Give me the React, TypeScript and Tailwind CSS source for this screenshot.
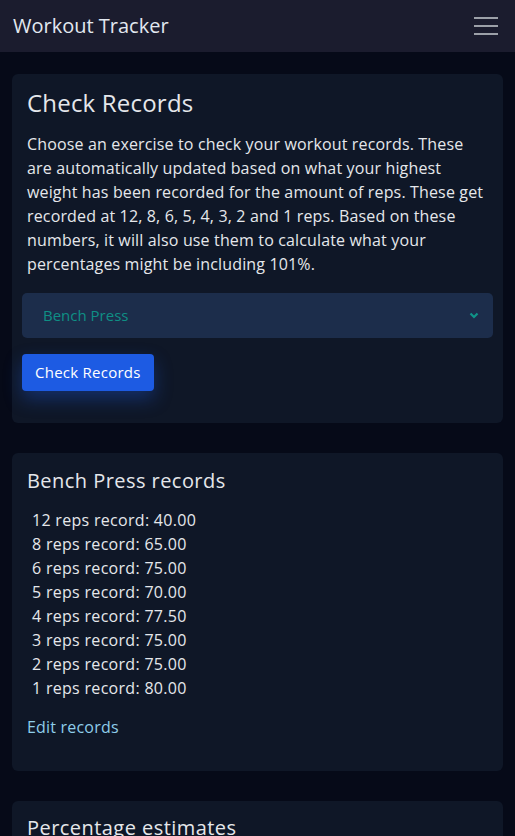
import React from "react";

const records = [
  ["12", "40.00"],
  ["8", "65.00"],
  ["6", "75.00"],
  ["5", "70.00"],
  ["4", "77.50"],
  ["3", "75.00"],
  ["2", "75.00"],
  ["1", "80.00"],
];

export default function App() {
  return (
    <div
      className="min-h-[836px] bg-[#060a18] text-[#e5e7eb]"
      style={{ fontFamily: "'Open Sans', 'Noto Sans', sans-serif" }}
    >
      <nav className="h-[52px] bg-[#1b1c2e] flex items-center justify-between pl-[13px] pr-[17px]">
        <span className="text-[20px] text-[#e2e8f0]">Workout Tracker</span>
        <div className="flex flex-col gap-[6px] w-[24px]">
          <span className="block h-[2px] bg-[#9ca0a8]" />
          <span className="block h-[2px] bg-[#9ca0a8]" />
          <span className="block h-[2px] bg-[#9ca0a8]" />
        </div>
      </nav>

      <main className="px-[12px] pt-[22px] flex flex-col gap-[30px]">
        <section className="bg-[#0f1727] rounded-[6px] px-[10px] pt-[14px] pb-[32px]">
          <h1 className="px-[5px] text-[24px] leading-[30px] tracking-[0.2px] text-[#e5e7eb]">Check Records</h1>
          <p className="px-[5px] mt-[14px] text-[16px] leading-[24px] tracking-[0.15px]">
            Choose an exercise to check your workout records. These are automatically updated based on what your highest weight has been recorded for the amount of reps. These get recorded at 12, 8, 6, 5, 4, 3, 2 and 1 reps. Based on these numbers, it will also use them to calculate what your percentages might be including 101%.
          </p>
          <div className="mt-[17px] h-[45px] bg-[#1c2d4b] rounded-[5px] flex items-center justify-between pl-[21px] pr-[14px]">
            <span className="text-[#0f8f85] text-[15px]">Bench Press</span>
            <svg width="10" height="7" viewBox="0 0 10 7">
              <path d="M1.5 1.5 L5 5 L8.5 1.5" stroke="#0f9488" strokeWidth="2.2" fill="none" />
            </svg>
          </div>
          <button className="mt-[16px] h-[37px] px-[13px] rounded-[4px] bg-[#1d5be3] text-white text-[15px] tracking-[0.25px] shadow-[0_8px_18px_rgba(29,91,227,0.35)]">
            Check Records
          </button>
        </section>

        <section className="bg-[#0f1727] rounded-[6px] px-[15px] pt-[15px] pb-[32px]">
          <h2 className="text-[20px] leading-[26px] tracking-[0.45px]">Bench Press records</h2>
          <div className="mt-[14px] pl-[5px] flex flex-col">
            {records.map(([r, v]) => (
              <div key={r} className="text-[16px] leading-[24px] tracking-[0.3px]">
                {r} reps record: {v}
              </div>
            ))}
          </div>
          <a className="block mt-[15px] text-[16px] leading-[24px] tracking-[0.2px] text-[#8ecdea]">Edit records</a>
        </section>

        <section className="bg-[#0f1727] rounded-[6px] px-[15px] pt-[14px] pb-[33px]">
          <h2 className="text-[20px] leading-[26px] tracking-[0.45px]">Percentage estimates</h2>
        </section>
      </main>
    </div>
  );
}
